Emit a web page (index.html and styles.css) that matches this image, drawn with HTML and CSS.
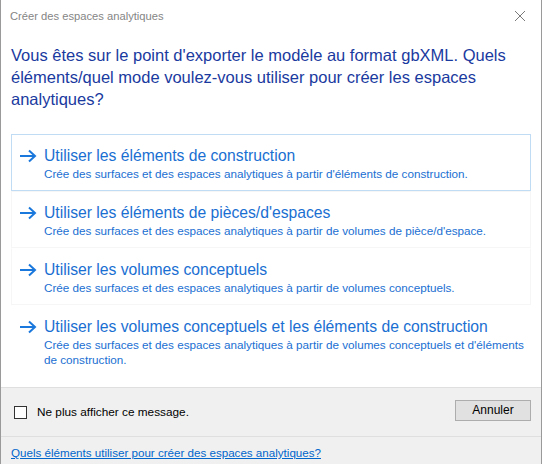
FILE: index.html
```html
<!DOCTYPE html>
<html lang="fr">
<head>
<meta charset="utf-8">
<title>Créer des espaces analytiques</title>
<link rel="stylesheet" href="styles.css">
</head>
<body>
<div class="dialog">
  <div class="titlebar">
    <span class="title">Créer des espaces analytiques</span>
    <svg class="close" width="12" height="12" viewBox="0 0 12 12"><path d="M1 1L11 11M11 1L1 11" stroke="#7a7a7a" stroke-width="1" fill="none"/></svg>
  </div>
  <div class="content">
    <p class="instruction">Vous êtes sur le point d'exporter le modèle au format gbXML. Quels<br>éléments/quel mode voulez-vous utiliser pour créer les espaces<br>analytiques?</p>
    <div class="options">
      <div class="option focused">
        <svg class="arrow" width="18" height="14" viewBox="0 0 18 14"><path d="M1 7H16M10 1.5L16 7L10 12.5" stroke="#1a78dc" stroke-width="2" fill="none"/></svg>
        <div class="otext">
          <div class="otitle">Utiliser les éléments de construction</div>
          <div class="odesc">Crée des surfaces et des espaces analytiques à partir d'éléments de construction.</div>
        </div>
      </div>
      <div class="option faint">
        <svg class="arrow" width="18" height="14" viewBox="0 0 18 14"><path d="M1 7H16M10 1.5L16 7L10 12.5" stroke="#1a78dc" stroke-width="2" fill="none"/></svg>
        <div class="otext">
          <div class="otitle">Utiliser les éléments de pièces/d'espaces</div>
          <div class="odesc">Crée des surfaces et des espaces analytiques à partir de volumes de pièce/d'espace.</div>
        </div>
      </div>
      <div class="option faint">
        <svg class="arrow" width="18" height="14" viewBox="0 0 18 14"><path d="M1 7H16M10 1.5L16 7L10 12.5" stroke="#1a78dc" stroke-width="2" fill="none"/></svg>
        <div class="otext">
          <div class="otitle">Utiliser les volumes conceptuels</div>
          <div class="odesc">Crée des surfaces et des espaces analytiques à partir de volumes conceptuels.</div>
        </div>
      </div>
      <div class="option">
        <svg class="arrow" width="18" height="14" viewBox="0 0 18 14"><path d="M1 7H16M10 1.5L16 7L10 12.5" stroke="#1a78dc" stroke-width="2" fill="none"/></svg>
        <div class="otext">
          <div class="otitle">Utiliser les volumes conceptuels et les éléments de construction</div>
          <div class="odesc">Crée des surfaces et des espaces analytiques à partir de volumes conceptuels et d'éléments<br>de construction.</div>
        </div>
      </div>
    </div>
  </div>
  <div class="footer">
    <label class="check"><span class="box"></span><span>Ne plus afficher ce message.</span></label>
    <button class="btn">Annuler</button>
  </div>
  <div class="help">
    <a href="#" class="link">Quels éléments utiliser pour créer des espaces analytiques?</a>
  </div>
</div>
</body>
</html>
```
FILE: styles.css
```css
* { box-sizing: border-box; }
html, body { margin: 0; padding: 0; }
body {
  width: 542px;
  height: 464px;
  font-family: "Liberation Sans", Arial, sans-serif;
  background: #f0f0f0;
}
.dialog {
  width: 542px;
  height: 464px;
  display: flex;
  flex-direction: column;
  border-left: 1px solid #9a9a9a;
  border-right: 1px solid #9a9a9a;
  background: #ffffff;
}
.titlebar {
  height: 32px;
  display: flex;
  align-items: center;
  justify-content: space-between;
  padding: 0 15px 0 9px;
}
.title {
  font-size: 11.2px;
  color: #858585;
}
.close { display: block; }
.content {
  padding: 12px 0 0 10px;
  height: 355px;
}
.instruction {
  margin: 0;
  font-size: 16.5px;
  line-height: 22px;
  color: #1a3aa0;
}
.options {
  margin-top: 24px;
  width: 520px;
  display: flex;
  flex-direction: column;
}
.option {
  display: flex;
  align-items: flex-start;
  gap: 7px;
  padding: 11px 8px 9px 7px;
  border: 1px solid transparent;
}
.option.focused { border-color: #bfdcf4; }
.option.faint { border-color: #f6f6f6; }
.option.faint + .option.faint { border-top-color: transparent; }
.arrow { margin-top: 3px; flex: none; }
.otext { min-width: 0; }
.otitle {
  font-size: 15.7px;
  line-height: 20px;
  color: #1a6fd2;
  white-space: nowrap;
}
.odesc {
  font-size: 11.7px;
  line-height: 15px;
  color: #1a6fd2;
  white-space: nowrap;
}
.footer {
  height: 50px;
  background: #f0f0f0;
  border-top: 1px solid #dfdfdf;
  border-bottom: 1px solid #dfdfdf;
  display: flex;
  align-items: center;
  justify-content: space-between;
  padding: 0 10px 0 13px;
}
.check {
  display: flex;
  align-items: center;
  gap: 10px;
  font-size: 11.8px;
  color: #000;
}
.box {
  width: 13px;
  height: 13px;
  border: 1px solid #333;
  background: #fff;
}
.btn {
  width: 76px;
  height: 21px;
  margin-top: -4px;
  background: #e1e1e1;
  border: 1px solid #adadad;
  font-family: "Liberation Sans", Arial, sans-serif;
  font-size: 12px;
  color: #000;
  padding: 0;
}
.help {
  flex: 1;
  background: #f0f0f0;
  padding: 6px 0 0 10px;
}
.link {
  font-size: 11.6px;
  color: #0066cc;
  text-decoration: underline;
}
```
